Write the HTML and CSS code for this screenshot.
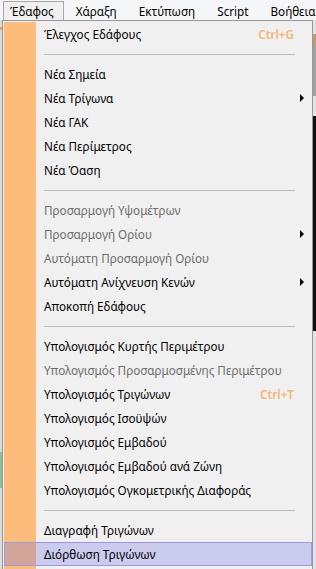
FILE: index.html
```html
<!DOCTYPE html>
<html lang="el">
<head>
<meta charset="utf-8">
<title>Μενού Έδαφος</title>
<link rel="stylesheet" href="styles.css">
</head>
<body>
<div class="window">
  <nav class="menubar">
    <span class="mb-item active">Έδαφος</span>
    <span class="mb-item">Χάραξη</span>
    <span class="mb-item">Εκτύπωση</span>
    <span class="mb-item">Script</span>
    <span class="mb-item">Βοήθεια</span>
  </nav>
  <div class="stage">
    <div class="edge-left"><span class="dot"></span><span class="green"></span></div>
    <div class="menu">
      <ul class="list">
        <li class="item"><span class="label">Έλεγχος Εδάφους</span><span class="key">Ctrl+G</span><span class="sub"></span></li>
        <li class="sep"></li>
        <li class="item"><span class="label">Νέα Σημεία</span><span class="key"></span><span class="sub"></span></li>
        <li class="item"><span class="label">Νέα Τρίγωνα</span><span class="key"></span><span class="sub"><i class="arrow"></i></span></li>
        <li class="item"><span class="label">Νέα ΓΑΚ</span><span class="key"></span><span class="sub"></span></li>
        <li class="item"><span class="label">Νέα Περίμετρος</span><span class="key"></span><span class="sub"></span></li>
        <li class="item"><span class="label">Νέα Όαση</span><span class="key"></span><span class="sub"></span></li>
        <li class="sep"></li>
        <li class="item disabled"><span class="label">Προσαρμογή Υψομέτρων</span><span class="key"></span><span class="sub"></span></li>
        <li class="item disabled"><span class="label">Προσαρμογή Ορίου</span><span class="key"></span><span class="sub"><i class="arrow"></i></span></li>
        <li class="item disabled"><span class="label">Αυτόματη Προσαρμογή Ορίου</span><span class="key"></span><span class="sub"></span></li>
        <li class="item"><span class="label">Αυτόματη Ανίχνευση Κενών</span><span class="key"></span><span class="sub"><i class="arrow"></i></span></li>
        <li class="item"><span class="label">Αποκοπή Εδάφους</span><span class="key"></span><span class="sub"></span></li>
        <li class="sep"></li>
        <li class="item"><span class="label">Υπολογισμός Κυρτής Περιμέτρου</span><span class="key"></span><span class="sub"></span></li>
        <li class="item disabled"><span class="label">Υπολογισμός Προσαρμοσμένης Περιμέτρου</span><span class="key"></span><span class="sub"></span></li>
        <li class="item"><span class="label">Υπολογισμός Τριγώνων</span><span class="key">Ctrl+T</span><span class="sub"></span></li>
        <li class="item"><span class="label">Υπολογισμός Ισοϋψών</span><span class="key"></span><span class="sub"></span></li>
        <li class="item"><span class="label">Υπολογισμός Εμβαδού</span><span class="key"></span><span class="sub"></span></li>
        <li class="item"><span class="label">Υπολογισμός Εμβαδού ανά Ζώνη</span><span class="key"></span><span class="sub"></span></li>
        <li class="item"><span class="label">Υπολογισμός Ογκομετρικής Διαφοράς</span><span class="key"></span><span class="sub"></span></li>
        <li class="sep"></li>
        <li class="item"><span class="label">Διαγραφή Τριγώνων</span><span class="key"></span><span class="sub"></span></li>
        <li class="item hover"><span class="label">Διόρθωση Τριγώνων</span><span class="key"></span><span class="sub"></span></li>
      </ul>
    </div>
    <div class="edge-right"><span class="tan"></span><span class="grey"></span><span class="black"></span></div>
  </div>
</div>
</body>
</html>
```

FILE: styles.css
```css
html, body {
  margin: 0;
  padding: 0;
}
body {
  width: 316px;
  height: 569px;
  overflow: hidden;
  background: #f0f0f0;
  font-family: "Noto Sans", "Open Sans", sans-serif;
  font-size: 11.7px;
  color: #000;
}
.window {
  display: flex;
  flex-direction: column;
  height: 569px;
}
.menubar {
  height: 20px;
  display: flex;
  align-items: stretch;
  background: #f5f6f7;
  padding-left: 3px;
  gap: 5px;
  box-sizing: border-box;
  overflow: hidden;
}
.mb-item {
  display: flex;
  align-items: center;
  padding: 0 9px 0 6px;
  white-space: nowrap;
  box-sizing: border-box;
  border: 1px solid transparent;
  border-bottom: 0;
  margin-top: 1px;
}
.mb-item.active {
  border-color: #a8a8a8;
  background: #f0f0f0;
}
.stage {
  flex: 1;
  display: flex;
  min-height: 0;
}
.edge-left {
  width: 2px;
  background: #dcdcdc;
  display: flex;
  flex-direction: column;
}
.edge-left .dot {
  height: 3px;
  margin-top: 7px;
  background: #e8a060;
}
.edge-left .green {
  height: 36px;
  margin-top: 422px;
  background: #8fbf8f;
}
.menu {
  width: 311px;
  box-sizing: border-box;
  border: 1px solid #979797;
  border-bottom: 0;
  background: #f0f0f0;
  padding: 1px 0 0 1px;
}
.list {
  list-style: none;
  margin: 0;
  padding: 0;
  background: linear-gradient(90deg, #fbbc7c 0 32px, #f0f0f0 32px);
  height: 100%;
}
.item {
  height: 24px;
  display: grid;
  grid-template-columns: 1fr auto 18px;
  align-items: center;
  padding-left: 40px;
  box-sizing: border-box;
  white-space: nowrap;
}
.item.disabled {
  color: #6d6d6d;
}
.key {
  color: #f7b676;
  font-weight: 600;
}
.sub {
  display: flex;
  align-items: center;
  padding-left: 6px;
}
.arrow {
  display: block;
  width: 0;
  height: 0;
  border-top: 4px solid transparent;
  border-bottom: 4px solid transparent;
  border-left: 4px solid #000;
}
.sep {
  height: 16px;
  display: flex;
  align-items: center;
  padding-left: 40px;
  padding-right: 17px;
}
.sep::before {
  content: "";
  flex: 1;
  height: 1px;
  background: #bdbdbd;
}
.item.hover {
  border: 1px solid #9999ee;
  background: rgba(96, 96, 230, 0.26);
  padding-left: 39px;
}
.edge-right {
  flex: 1;
  display: flex;
  flex-direction: column;
  background: #e4e4e4;
}
.edge-right .tan {
  height: 12px;
  margin-top: 14px;
  background: #c49a70;
}
.edge-right .grey {
  height: 50px;
  background: #a0a0a0;
}
.edge-right .black {
  height: 215px;
  margin-top: 20px;
  background: #101010;
}
```
